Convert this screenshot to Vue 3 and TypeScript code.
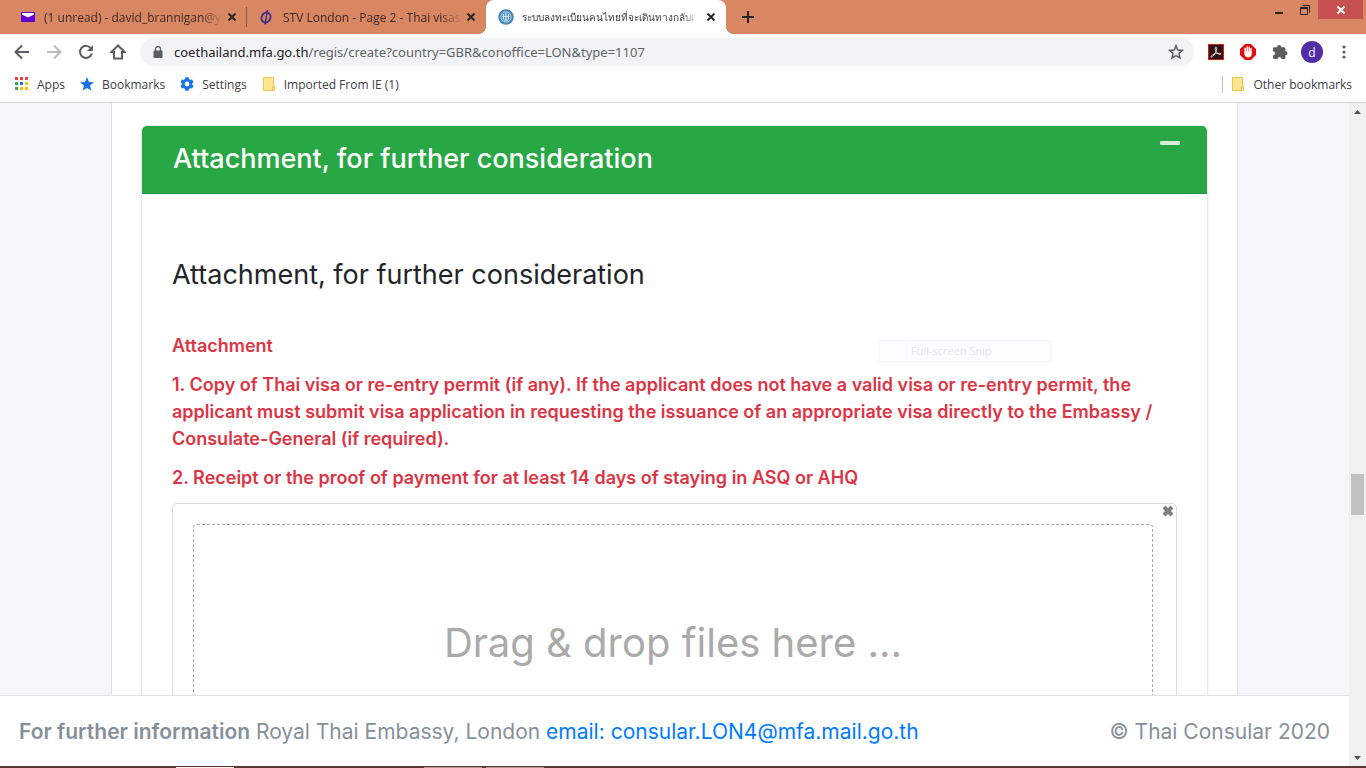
<script setup lang="ts">
import { ref } from 'vue'

interface Tab {
  title: string
  icon: 'mail' | 'forum' | 'embassy'
  active: boolean
}

const tabs: Tab[] = [
  { title: '(1 unread) - david_brannigan@ya', icon: 'mail', active: false },
  { title: 'STV London - Page 2 - Thai visas,', icon: 'forum', active: false },
  { title: 'ระบบลงทะเบียนคนไทยที่จะเดินทางกลับเ', icon: 'embassy', active: true },
]

const host = 'coethailand.mfa.go.th'
const path = '/regis/create?country=GBR&conoffice=LON&type=1107'
const open = ref(true)
const appColors = ['#ea4335', '#ea4335', '#ea4335', '#34a853', '#1a73e8', '#fbbc04', '#34a853', '#fbbc04', '#fbbc04']
</script>

<template>
  <div class="window">
    <header class="browser">
      <div class="tabstrip">
        <div v-for="tab in tabs" :key="tab.icon" class="tab" :class="{ active: tab.active }">
          <svg v-if="tab.icon === 'mail'" class="favicon" viewBox="0 0 16 16">
            <rect x="1" y="3" width="14" height="10" rx="1" fill="#5f01d1" />
            <path d="M2 4h12v1.500L8 8.500 2 5.500z" fill="#fff" />
          </svg>
          <svg v-else-if="tab.icon === 'forum'" class="favicon" viewBox="0 0 16 16" fill="none" stroke="#443087">
            <ellipse cx="7" cy="8.500" rx="4.300" ry="5.200" stroke-width="2" transform="rotate(25 7 8.500)" />
            <path d="M8.500 1 6 15.500" stroke-width="1.500" />
          </svg>
          <svg v-else class="favicon" viewBox="0 0 16 16">
            <circle cx="8" cy="8" r="7.800" fill="#4687b8" />
            <circle cx="8" cy="8" r="5.200" fill="#5e9ac5" stroke="#a9cbe2" />
            <path d="M8 3.500v9M5.500 5v5.500M10.500 5v5.500M4.500 7.500h7M6 11h4" stroke="#cfe3f0" fill="none" />
          </svg>
          <span class="tab-title">{{ tab.title }}</span>
          <button class="tab-close" type="button" aria-label="Close tab">
            <svg viewBox="0 0 10 10"><path d="M1.500 1.500l7 7M8.500 1.500l-7 7" stroke="currentColor" stroke-width="1.800" /></svg>
          </button>
        </div>
        <button class="new-tab" type="button" aria-label="New tab">
          <svg viewBox="0 0 12 12"><path d="M6 0v12M0 6h12" stroke="#222" stroke-width="2" /></svg>
        </button>
        <div class="window-buttons">
          <button type="button" class="minimize" aria-label="Minimize">
            <svg viewBox="0 0 10 10"><path d="M1 5h8v2H1z" fill="#222" /></svg>
          </button>
          <button type="button" class="restore" aria-label="Restore">
            <svg viewBox="0 0 10 10"><path d="M.5 2.500h7v7h-7zM.5 3.500h7M2.500 .5h7v7" fill="none" stroke="#222" /></svg>
          </button>
          <button type="button" class="close" aria-label="Close">
            <svg viewBox="0 0 10 10"><path d="M1.500 1.500l7 7M8.500 1.500l-7 7" stroke="#fff" stroke-width="2" /></svg>
          </button>
        </div>
      </div>

      <div class="toolbar">
        <button type="button" aria-label="Back">
          <svg viewBox="0 0 16 16" fill="none" stroke="#5a5d61" stroke-width="2"><path d="M15 8H2M8 1.500 1.500 8 8 14.500" /></svg>
        </button>
        <button type="button" aria-label="Forward">
          <svg viewBox="0 0 16 16" fill="none" stroke="#bbbcbe" stroke-width="2"><path d="M1 8h13M8 1.500 14.500 8 8 14.500" /></svg>
        </button>
        <button type="button" aria-label="Reload">
          <svg viewBox="0 0 16 16"><path d="M13 4.500A6 6 0 1 0 13.800 9.500" fill="none" stroke="#5a5d61" stroke-width="2" /><path d="M15 1v6H9z" fill="#5a5d61" /></svg>
        </button>
        <button type="button" aria-label="Home">
          <svg viewBox="0 0 16 16"><path d="M8 1.500 1.500 8H4v6.500h8V8h2.500z" fill="none" stroke="#5a5d61" stroke-width="2" /></svg>
        </button>
        <div class="address">
          <svg class="lock" viewBox="0 0 10 12"><path d="M1.500 4.500h7a1 1 0 0 1 1 1V11a1 1 0 0 1-1 1h-7a1 1 0 0 1-1-1V5.500a1 1 0 0 1 1-1z" fill="#5a5d61" /><path d="M2.500 5V3a2.500 2.500 0 0 1 5 0v2" fill="none" stroke="#5a5d61" stroke-width="1.300" /></svg>
          <a class="url" href="#"><span>{{ host }}</span>{{ path }}</a>
          <button type="button" class="star" aria-label="Bookmark this page">
            <svg viewBox="0 0 16 16"><path d="M8 1.800 9.800 6l4.600.4-3.500 3 1.100 4.500L8 11.500l-4 2.400 1.100-4.500-3.500-3L6.200 6z" fill="none" stroke="#5a5d61" stroke-width="1.500" /></svg>
          </button>
        </div>
        <div class="extensions">
          <button type="button" aria-label="PDF">
            <svg viewBox="0 0 16 16"><rect x=".5" y=".5" width="15" height="15" fill="#2d1114" stroke="#d01f10" /><path d="M3 12.500C4 10.500 7 9.300 12 9.300c1.800.6.500 1.700-1 1C8.500 9 7 6 7.200 4c.2-1.300 1.600-1 1.500.5C8.500 7 7 10 5.200 12c-1 1.200-2.500 1.500-2.200.5z" fill="none" stroke="#ddd" /></svg>
          </button>
          <button type="button" aria-label="Ad blocker">
            <svg viewBox="0 0 16 16"><path d="M5 0h6l5 5v6l-5 5H5l-5-5V5z" fill="#e40d0d" /><path d="M5.200 9V4.500M7.200 8V3M9.200 8V3.200M11 8.500V4.800" stroke="#fff" stroke-width="1.500" stroke-linecap="round" /><path d="M4.500 7.500h7.200V10c0 2-1.400 3.500-3.500 3.500-2.300 0-3.400-1.500-3.700-3z" fill="#fff" /></svg>
          </button>
          <button type="button" aria-label="Extensions">
            <svg viewBox="0 0 16 16"><path d="M1 4.500A1.300 1.300 0 0 1 2.300 3.200H5a2.200 2.200 0 0 1 4.400 0h2.700a1.300 1.300 0 0 1 1.300 1.300v2.700a2.100 2.100 0 0 1 0 4.300v2.200a1.300 1.300 0 0 1-1.300 1.300H9.500a2 2 0 0 0-4 0H2.300A1.300 1.300 0 0 1 1 13.700v-2.300a2 2 0 0 0 0-4.200z" fill="#5a5d61" /></svg>
          </button>
          <button type="button" class="avatar" aria-label="Profile">d</button>
          <button type="button" aria-label="Menu">
            <svg viewBox="0 0 16 16" fill="#5a5d61"><circle cx="8" cy="3" r="1.600" /><circle cx="8" cy="8" r="1.600" /><circle cx="8" cy="13" r="1.600" /></svg>
          </button>
        </div>
      </div>

      <nav class="bookmarks">
        <a href="#">
          <svg viewBox="0 0 14 14"><rect v-for="(c, i) in appColors" :key="i" :x="(i % 3) * 5" :y="Math.floor(i / 3) * 5" width="3" height="3" :fill="c" /></svg>
          Apps
        </a>
        <a href="#">
          <svg viewBox="0 0 14 14"><path d="M7 0l2 5 5 .3-4 3.300 1.400 5L7 11l-4.400 2.600 1.400-5L0 5.300 5 5z" fill="#1a73e8" /></svg>
          Bookmarks
        </a>
        <a href="#">
          <svg viewBox="0 0 14 14"><circle cx="7" cy="7" r="3.900" fill="none" stroke="#1a73e8" stroke-width="3" /><path d="M7 .3v2M7 11.700v2M1.200 3.700l1.800 1M11 9.300l1.800 1M1.200 10.300l1.800-1M11 4.700l1.800-1" stroke="#1a73e8" stroke-width="3.400" /></svg>
          Settings
        </a>
        <a href="#">
          <svg viewBox="0 0 14 14"><path d="M1.500 .5h10v9h1v4h-11z" fill="#ffe591" stroke="#e8c546" /><path d="M10.500 13V10h2" fill="none" stroke="#e8c546" /></svg>
          Imported From IE (1)
        </a>
        <a class="other" href="#">
          <svg viewBox="0 0 14 14"><path d="M1.500 .5h10v9h1v4h-11z" fill="#ffe591" stroke="#e8c546" /><path d="M10.500 13V10h2" fill="none" stroke="#e8c546" /></svg>
          Other bookmarks
        </a>
      </nav>
    </header>

    <div class="viewport">
      <div class="page">
        <main class="content">
          <div class="sheet">
            <section class="card">
              <div class="card-header">
                <h2>Attachment, for further consideration</h2>
                <button type="button" class="collapse" aria-label="Collapse section" @click="open = !open"></button>
              </div>
              <div v-if="open" class="card-body">
                <h3>Attachment, for further consideration</h3>
                <div class="notes">
                  <p>Attachment</p>
                  <p>1. Copy of Thai visa or re-entry permit (if any). If the applicant does not have a valid visa or re-entry permit, the<br>applicant must submit visa application in requesting the issuance of an appropriate visa directly to the Embassy /<br>Consulate-General (if required).</p>
                  <p>2. Receipt or the proof of payment for at least 14 days of staying in ASQ or AHQ</p>
                </div>
                <div class="preview">
                  <button type="button" class="clear" aria-label="Clear files">
                    <svg viewBox="0 0 12 12"><path d="M2 2l8 8M10 2l-8 8" stroke="#808080" stroke-width="4" /></svg>
                  </button>
                  <div class="dropzone">Drag &amp; drop files here ...</div>
                </div>
                <div class="snip"><span>Full-screen Snip</span></div>
              </div>
            </section>
          </div>
        </main>
        <footer class="footer">
          <div><strong>For further information</strong> Royal Thai Embassy, London <a href="mailto:consular.LON4@mfa.mail.go.th">email: consular.LON4@mfa.mail.go.th</a></div>
          <div>© Thai Consular 2020</div>
        </footer>
      </div>
      <div class="scrollbar">
        <svg viewBox="0 0 7 4"><path d="M0 4 3.500 0 7 4z" fill="#505050" /></svg>
        <div class="track"><div class="thumb"></div></div>
        <svg viewBox="0 0 7 4"><path d="M0 0h7L3.500 4z" fill="#505050" /></svg>
      </div>
    </div>
    <div class="taskbar"><i></i><i></i><i></i></div>
  </div>
</template>

<style>
body {
  margin: 0;
}
</style>

<style scoped>
* {
  box-sizing: border-box;
}
.window {
  display: flex;
  flex-direction: column;
  height: 100vh;
  overflow: hidden;
  background: #fff;
  font-family: "Open Sans", "Noto Sans", sans-serif;
}
button {
  display: flex;
  align-items: center;
  justify-content: center;
  padding: 0;
  border: 0;
  background: none;
  font: inherit;
  color: inherit;
}
a {
  text-decoration: none;
}
svg {
  display: block;
  flex: none;
}
.browser {
  flex: none;
  border-bottom: 1px solid #d5d7da;
}
.tabstrip {
  display: flex;
  height: 34px;
  padding-left: 8px;
  background: #d98662;
}
.tab {
  position: relative;
  display: flex;
  align-items: center;
  width: 239px;
  padding: 0 9px 0 12px;
  font-size: 12px;
  color: #3b2a22;
}
.tab:first-child::after {
  content: "";
  position: absolute;
  right: 0;
  top: 7px;
  width: 1px;
  height: 20px;
  background: #8b5842;
}
.tab.active {
  width: 240px;
  background: #fff;
  border-radius: 8px 8px 0 0;
  font-size: 10px;
  color: #3c4043;
}
.tab.active::before,
.tab.active::after {
  content: "";
  position: absolute;
  bottom: 0;
  width: 8px;
  height: 8px;
}
.tab.active::before {
  left: -8px;
  background: radial-gradient(circle at 0 0, transparent 8px, #fff 8px);
}
.tab.active::after {
  right: -8px;
  background: radial-gradient(circle at 100% 0, transparent 8px, #fff 8px);
}
.favicon {
  width: 16px;
  height: 16px;
  margin-right: 8px;
}
.tab-title {
  flex: 1;
  overflow: hidden;
  white-space: nowrap;
  mask-image: linear-gradient(to left, transparent, #000 20px);
}
.tab-close {
  width: 12px;
  height: 16px;
  margin-left: 4px;
  color: #222;
}
.tab-close svg {
  width: 10px;
  height: 10px;
}
.new-tab {
  width: 28px;
  margin-left: 8px;
}
.new-tab svg {
  width: 12px;
  height: 12px;
}
.window-buttons {
  display: flex;
  margin-left: auto;
  padding-right: 3px;
}
.window-buttons button {
  width: 26px;
  height: 19px;
}
.window-buttons svg {
  width: 10px;
  height: 10px;
}
.window-buttons .minimize {
  padding-top: 4px;
}
.window-buttons .close {
  width: 45px;
  background: #c75050;
}
.toolbar {
  display: flex;
  align-items: center;
  height: 36px;
  padding: 0 6px;
}
.toolbar button {
  width: 32px;
  height: 28px;
}
.toolbar svg {
  width: 16px;
  height: 16px;
}
.address {
  display: flex;
  flex: 1;
  align-items: center;
  height: 28px;
  margin-left: 6px;
  padding: 0 2px 0 13px;
  border-radius: 14px;
  background: #f1f3f4;
}
.address .lock {
  width: 10px;
  height: 12px;
}
.url {
  flex: 1;
  margin-left: 11px;
  font-family: "Noto Sans", sans-serif;
  font-size: 13px;
  color: #5f6368;
}
.url span {
  color: #202124;
}
.extensions {
  display: flex;
  align-items: center;
  margin-left: 6px;
}
.extensions .avatar {
  width: 22px;
  height: 22px;
  margin: 0 5px;
  border-radius: 50%;
  background: #512da8;
  color: #fff;
  font-size: 12px;
}
.bookmarks {
  display: flex;
  align-items: center;
  height: 32px;
  padding: 0 14px 4px 15px;
  font-size: 12px;
}
.bookmarks a {
  display: flex;
  align-items: center;
  margin-right: 15px;
  color: #3c4043;
}
.bookmarks svg {
  width: 14px;
  height: 14px;
  margin-right: 8px;
}
.bookmarks .other {
  margin: 0 0 0 auto;
  padding-left: 8px;
  border-left: 1px solid #c4c6c9;
}
.viewport {
  display: flex;
  flex: 1;
  min-height: 0;
}
.page {
  display: flex;
  flex: 1;
  flex-direction: column;
  min-width: 0;
  font-family: Inter, sans-serif;
}
.content {
  flex: 1;
  min-height: 0;
  overflow: hidden;
  padding: 0 111px;
  background: #f4f6f9;
}
.sheet {
  padding: 23px 30px 0;
  border: solid #dee2e6;
  border-width: 0 1px;
  background: #fff;
}
.card {
  border-radius: 5px;
  box-shadow: 0 0 1px rgba(0, 0, 0, 0.3), 0 1px 3px rgba(0, 0, 0, 0.15);
}
.card-header {
  display: flex;
  justify-content: space-between;
  align-items: flex-start;
  padding: 15px 27px 16px 31px;
  border-bottom: 1px solid #24923d;
  border-radius: 5px 5px 0 0;
  background: #28a745;
  color: #fff;
}
h2,
h3 {
  margin: 0;
  font-size: 27px;
  line-height: 36px;
  font-weight: 400;
}
h2 {
  font-weight: 500;
}
.card-header .collapse {
  width: 20px;
  height: 4px;
  border-radius: 1px;
  background: #d4edda;
}
.card-body {
  position: relative;
  padding: 63px 30px 0;
}
.card-body h3 {
  color: #212529;
}
.notes {
  margin-top: 39px;
  font-size: 18px;
  line-height: 27px;
  font-weight: 600;
  color: #dc3545;
}
.notes p {
  margin: 0 0 12px;
  white-space: nowrap;
}
.preview {
  position: relative;
  padding: 20px 23px 20px 20px;
  border: 1px solid #ddd;
  border-radius: 5px;
}
.clear {
  position: absolute;
  top: 1px;
  right: 2px;
  width: 12px;
  height: 12px;
}
.clear svg {
  width: 12px;
  height: 12px;
}
.dropzone {
  padding: 88px 0;
  border: 1px dashed #aaa;
  border-radius: 4px;
  font-size: 40px;
  line-height: 60px;
  text-align: center;
  color: #aaa;
}
.snip {
  position: absolute;
  top: 146px;
  right: 155px;
  width: 173px;
  height: 22px;
  padding-left: 26px;
  border: 1px solid #f3f6fb;
  background: #fcfdff;
  font-family: "Open Sans", sans-serif;
  font-size: 11px;
  line-height: 20px;
  color: #e8e8e8;
}
.snip span {
  display: block;
  padding-left: 4px;
  border-left: 1px solid #f8fafd;
}
.footer {
  display: flex;
  flex: none;
  align-items: center;
  justify-content: space-between;
  height: 71px;
  padding: 0 19px;
  border-top: 1px solid #dee2e6;
  background: #fff;
  font-size: 21px;
  color: #869099;
}
.footer strong {
  font-weight: 600;
}
.footer a {
  color: #007bff;
}
.scrollbar {
  display: flex;
  flex-direction: column;
  align-items: center;
  width: 17px;
  padding: 7px 0 6px;
  background: #f0f0f0;
}
.scrollbar svg {
  width: 7px;
  height: 4px;
}
.track {
  flex: 1;
  padding-top: 360px;
}
.thumb {
  width: 13px;
  height: 41px;
  background: #c1c1c1;
}
.taskbar {
  display: flex;
  align-items: flex-end;
  flex: none;
  height: 2px;
  padding-left: 176px;
  background: #5b362c;
}
.taskbar i {
  width: 58px;
  height: 1px;
  background: #f5eeec;
}
.taskbar i + i {
  margin-left: 190px;
  background: #b39a93;
}
.taskbar i + i + i {
  margin-left: 4px;
}
</style>
